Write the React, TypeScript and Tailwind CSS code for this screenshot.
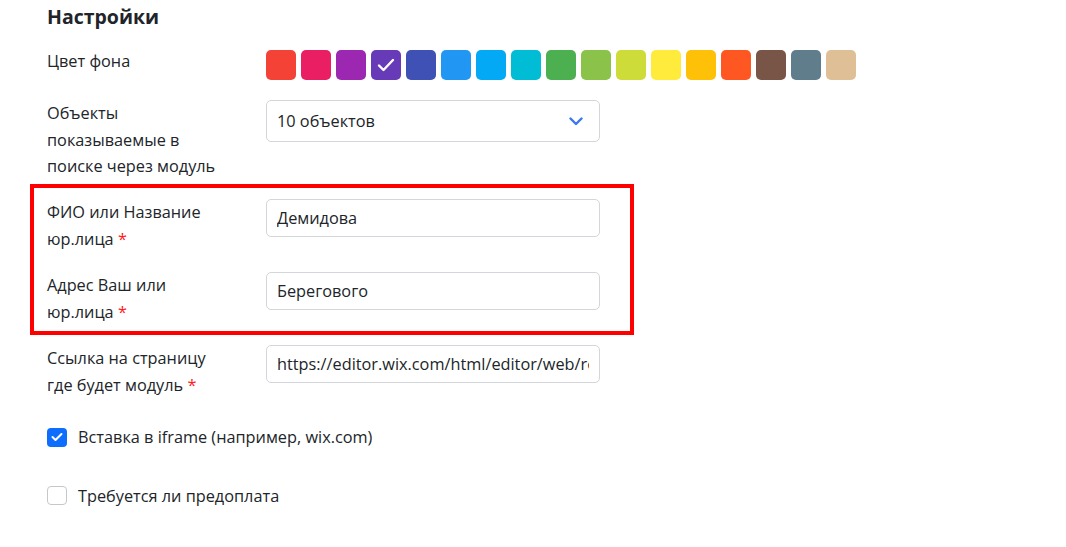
import React from "react";

const colors = [
  "#f44336",
  "#e91e63",
  "#9c27b0",
  "#673ab7",
  "#3f51b5",
  "#2196f3",
  "#03a9f4",
  "#00bcd4",
  "#4caf50",
  "#8bc34a",
  "#cddc39",
  "#ffeb3b",
  "#ffc107",
  "#ff5722",
  "#795548",
  "#607d8b",
  "#dfc096",
];

const Req = () => <span className="text-[#ff1a1a]"> *</span>;

function Field({ label, value }: { label: React.ReactNode; value: string }) {
  return (
    <div className="flex items-start">
      <div className="w-[219px] shrink-0 whitespace-nowrap">{label}</div>
      <input
        readOnly
        defaultValue={value}
        className="w-[334px] h-[38px] rounded-[5px] border border-[#d3d6da] bg-white px-[10px] outline-none text-[#212529]"
      />
    </div>
  );
}

export default function App() {
  const selected = 3; // выбранный цвет

  return (
    <div className="min-h-screen bg-white pl-[47px] pt-[3px] text-[16.3px] leading-[26.5px] text-[#212529] font-['Open_Sans','Liberation_Sans',sans-serif]">
      <h2 className="text-[19.5px] font-bold leading-[28px]">Настройки</h2>

      {/* цвет фона */}
      <div className="mt-[17px] flex items-start">
        <div className="w-[219px] shrink-0">Цвет фона</div>
        <div className="mt-[2px] flex gap-[5px]">
          {colors.map((c, i) => (
            <div
              key={c}
              className="flex h-[30px] w-[30px] items-center justify-center rounded-[5px]"
              style={{ backgroundColor: c }}
            >
              {i === selected && (
                <svg width="18" height="14" viewBox="0 0 18 14" fill="none">
                  <path d="M2 7.5 L6.5 12 L16 2" stroke="white" strokeWidth="2.4" strokeLinecap="round" strokeLinejoin="round" />
                </svg>
              )}
            </div>
          ))}
        </div>
      </div>

      {/* количество объектов */}
      <div className="mt-[20px] flex items-start">
        <div className="w-[219px] shrink-0 whitespace-nowrap">
          Объекты
          <br />
          показываемые в
          <br />
          поиске через модуль
        </div>
        <div className="flex h-[42px] w-[334px] items-center justify-between rounded-[5px] border border-[#d3d6da] bg-white pl-[10px] pr-[16px]">
          <span>10 объектов</span>
          <svg width="14" height="9" viewBox="0 0 14 9" fill="none">
            <path d="M1.5 1.5 L7 7 L12.5 1.5" stroke="#3b76ef" strokeWidth="2.4" strokeLinecap="round" strokeLinejoin="round" />
          </svg>
        </div>
      </div>

      {/* выделенный блок */}
      <div className="ml-[-17px] mt-[4.5px] w-[604px] border-4 border-[#ff0000] pb-[6px] pl-[13px] pr-[30px] pt-[11px]">
        <Field
          label={
            <>
              ФИО или Название
              <br />
              юр.лица
              <Req />
            </>
          }
          value="Демидова"
        />
        <div className="mt-[20px]">
          <Field
            label={
              <>
                Адрес Ваш или
                <br />
                юр.лица
                <Req />
              </>
            }
            value="Берегового"
          />
        </div>
      </div>

      <div className="mt-[10px]">
        <Field
          label={
            <>
              Ссылка на страницу
              <br />
              где будет модуль
              <Req />
            </>
          }
          value="https://editor.wix.com/html/editor/web/renderer/edit"
        />
      </div>

      <label className="mt-[26px] flex items-center gap-[11px]">
        <span className="flex h-[19px] w-[20px] items-center justify-center rounded-[4px] bg-[#0d6efd]">
          <svg width="12" height="10" viewBox="0 0 12 10" fill="none">
            <path d="M1.5 5 L4.5 8 L10.5 2" stroke="white" strokeWidth="2" strokeLinecap="round" strokeLinejoin="round" />
          </svg>
        </span>
        <span>Вставка в iframe (например, wix.com)</span>
      </label>

      <label className="mt-[32px] flex items-center gap-[11px]">
        <span className="h-[19px] w-[20px] rounded-[4px] border border-[#c4c8cc] bg-white" />
        <span>Требуется ли предоплата</span>
      </label>
    </div>
  );
}
